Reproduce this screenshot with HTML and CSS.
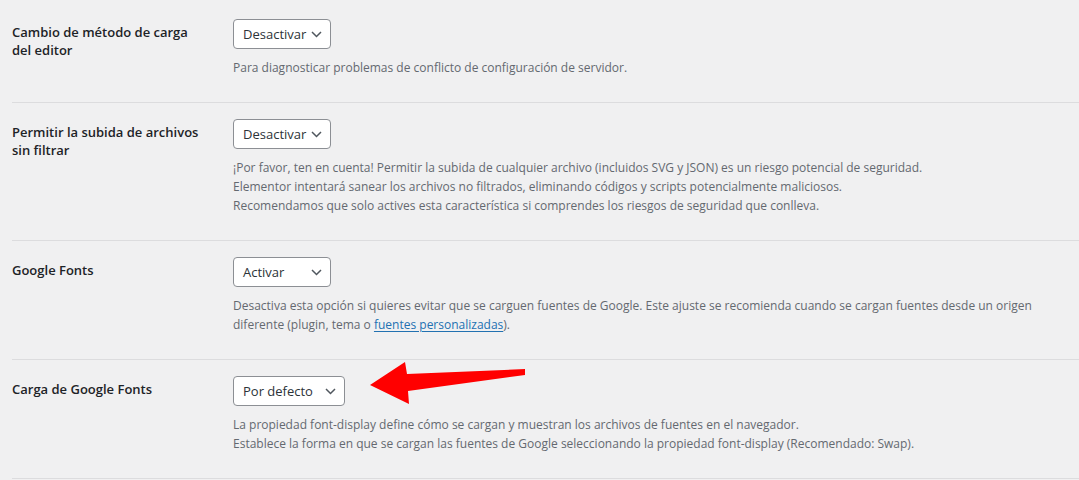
FILE: index.html
```html
<!DOCTYPE html>
<html lang="es">
<head>
    <meta charset="UTF-8">
    <meta name="viewport" content="width=device-width, initial-scale=1.0">
    <title>Ajustes avanzados</title>
    <link rel="stylesheet" href="styles.css">
</head>
<body>
    <div class="settings">
        <div class="setting-row">
            <div class="setting-label">Cambio de método de carga del editor</div>
            <div class="setting-field">
                <div class="select select-sm">
                    <span>Desactivar</span>
                    <svg class="chevron" width="11" height="7" viewBox="0 0 11 7"><path d="M1 1l4.5 4.5L10 1" fill="none" stroke="#50575e" stroke-width="1.5"/></svg>
                </div>
                <p class="description">Para diagnosticar problemas de conflicto de configuración de servidor.</p>
            </div>
        </div>

        <div class="setting-row">
            <div class="setting-label">Permitir la subida de archivos sin filtrar</div>
            <div class="setting-field">
                <div class="select select-sm">
                    <span>Desactivar</span>
                    <svg class="chevron" width="11" height="7" viewBox="0 0 11 7"><path d="M1 1l4.5 4.5L10 1" fill="none" stroke="#50575e" stroke-width="1.5"/></svg>
                </div>
                <p class="description">¡Por favor, ten en cuenta! Permitir la subida de cualquier archivo (incluidos SVG y JSON) es un riesgo potencial de seguridad.<br>
                Elementor intentará sanear los archivos no filtrados, eliminando códigos y scripts potencialmente maliciosos.<br>
                Recomendamos que solo actives esta característica si comprendes los riesgos de seguridad que conlleva.</p>
            </div>
        </div>

        <div class="setting-row">
            <div class="setting-label">Google Fonts</div>
            <div class="setting-field">
                <div class="select select-sm">
                    <span>Activar</span>
                    <svg class="chevron" width="11" height="7" viewBox="0 0 11 7"><path d="M1 1l4.5 4.5L10 1" fill="none" stroke="#50575e" stroke-width="1.5"/></svg>
                </div>
                <p class="description">Desactiva esta opción si quieres evitar que se carguen fuentes de Google. Este ajuste se recomienda cuando se cargan fuentes desde un origen diferente (plugin, tema o <a href="#">fuentes personalizadas</a>).</p>
            </div>
        </div>

        <div class="setting-row">
            <div class="setting-label">Carga de Google Fonts</div>
            <div class="setting-field">
                <div class="select select-md">
                    <span>Por defecto</span>
                    <svg class="chevron" width="11" height="7" viewBox="0 0 11 7"><path d="M1 1l4.5 4.5L10 1" fill="none" stroke="#50575e" stroke-width="1.5"/></svg>
                </div>
                <p class="description">La propiedad font-display define cómo se cargan y muestran los archivos de fuentes en el navegador.<br>
                Establece la forma en que se cargan las fuentes de Google seleccionando la propiedad font-display (Recomendado: Swap).</p>
                <!-- flecha roja de la captura -->
                <svg class="arrow" width="160" height="44" viewBox="0 0 160 44">
                    <path d="M0 23 L35 0 L37 12 L155 7 L155 13 L38 29 L39 42 Z" fill="#ff0000"/>
                </svg>
            </div>
        </div>
    </div>
</body>
</html>
```

FILE: styles.css
```css
body {
    margin: 0;
    padding: 0;
    background: #f0f0f1;
    font-family: 'Open Sans', 'Liberation Sans', sans-serif;
    color: #1d2327;
    overflow: hidden;
}

.settings {
    padding: 3px 0 0 12px;
}

.setting-row {
    display: grid;
    grid-template-columns: 190px 1fr;
    column-gap: 31px;
    border-bottom: 1px solid #dcdcde;
    padding: 16px 0 25px;
}

.setting-label {
    font-size: 13px;
    font-weight: 600;
    line-height: 18px;
    padding-top: 4px;
}

.setting-field {
    position: relative;
}

.select {
    display: flex;
    align-items: center;
    justify-content: space-between;
    box-sizing: border-box;
    height: 30px;
    padding: 0 8px 0 9px;
    background: #ffffff;
    border: 1px solid #8c8f94;
    border-radius: 4px;
    font-size: 13px;
    color: #2c3338;
}

.select-sm {
    width: 98px;
}

.select-md {
    width: 112px;
}

.description {
    margin: 9px 0 0;
    font-size: 12px;
    line-height: 19px;
    color: #646970;
    padding-right: 20px;
}

.description a {
    color: #2271b1;
    text-decoration: underline;
    text-underline-offset: 2px;
}

.arrow {
    position: absolute;
    left: 137px;
    top: -14px;
}
```
